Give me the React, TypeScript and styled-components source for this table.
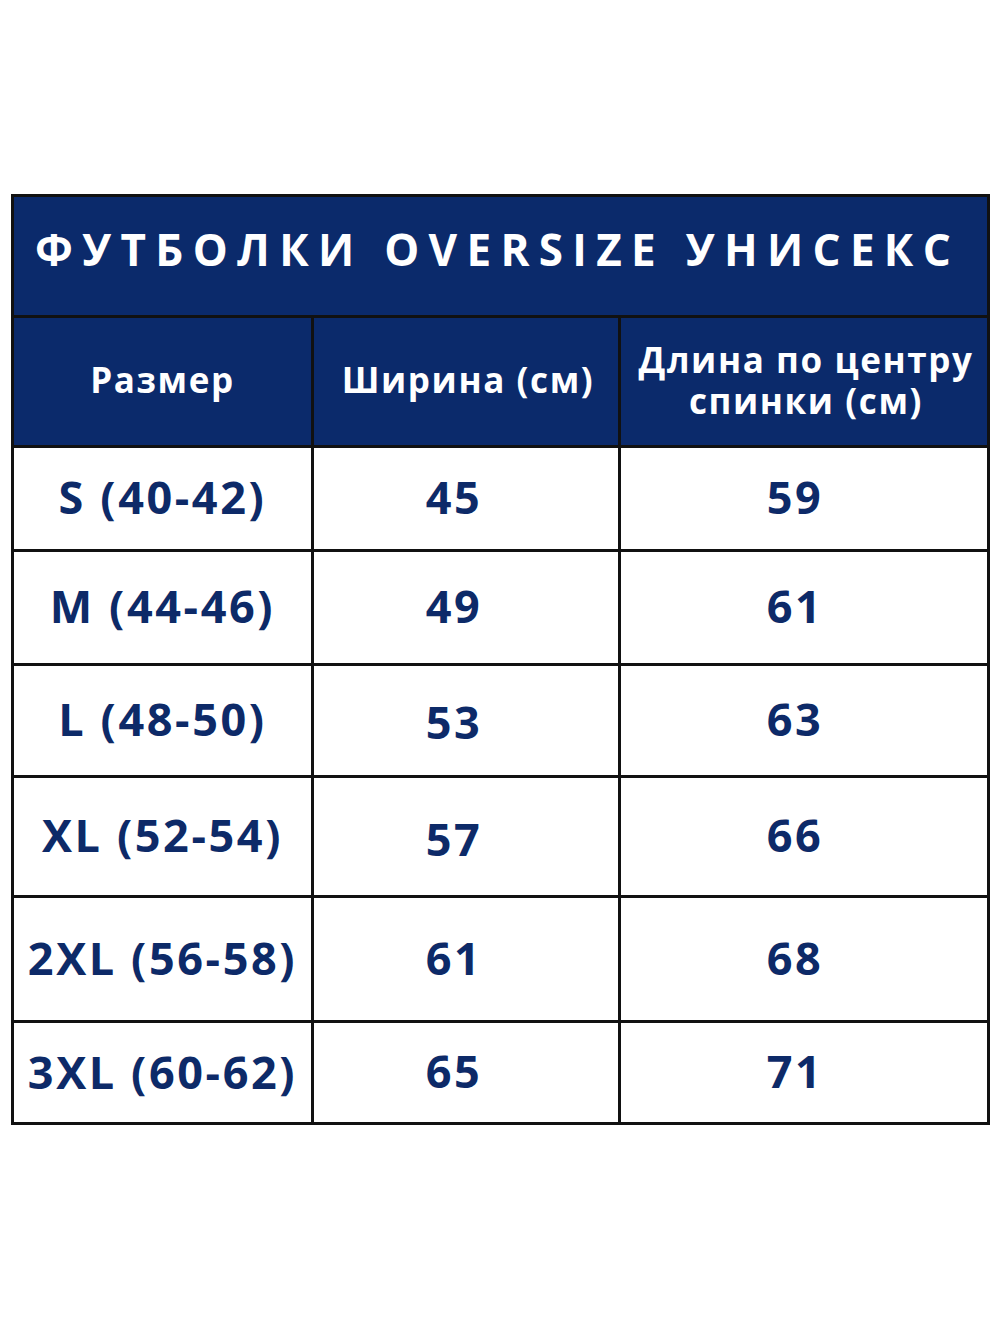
import React from "react";
import styled, { createGlobalStyle } from "styled-components";

const Global = createGlobalStyle`
  html, body { margin: 0; padding: 0; background: #ffffff; }
  body { font-family: "Open Sans", "Liberation Sans", sans-serif; }
`;

const Page = styled.div`
  width: 1000px;
  height: 1333px;
  padding: 194px 0 0 11px;
  box-sizing: border-box;
`;

const Table = styled.div`
  width: 979px;
  box-sizing: border-box;
  display: grid;
  grid-template-columns: 297px 304px 366px;
  grid-template-rows: 118px 127px 101px 111px 109px 117px 122px 99px;
  gap: 3px;
  padding: 3px;
  background: #111111;
`;

const Title = styled.div`
  grid-column: 1 / -1;
  background: #0b2a6b;
  color: #ffffff;
  font-weight: 700;
  font-size: 44px;
  letter-spacing: 9.3px;
  white-space: nowrap;
  display: flex;
  align-items: center;
  justify-content: center;
  padding-bottom: 14px;
  padding-right: 6px;
  box-sizing: border-box;
`;

const Head = styled.div<{ $shift?: number }>`
  background: #0b2a6b;
  color: #ffffff;
  font-weight: 700;
  font-size: 35px;
  line-height: 41px;
  letter-spacing: 1.6px;
  text-align: center;
  display: flex;
  align-items: center;
  justify-content: center;
  padding-left: ${(p) => p.$shift ?? 0}px;
  padding-bottom: 4px;
  box-sizing: border-box;
`;

const Cell = styled.div<{ $shift?: number; $dy?: number }>`
  background: #ffffff;
  color: #0d2a68;
  font-weight: 700;
  font-size: 45px;
  letter-spacing: 2.6px;
  display: flex;
  align-items: center;
  justify-content: center;
  padding-right: ${(p) => p.$shift ?? 0}px;
  padding-top: ${(p) => (p.$dy ?? 0) * 2}px;
  padding-bottom: 4px;
  box-sizing: border-box;
`;

const rows: [string, string, string, number, number, number][] = [
  ["S (40-42)", "45", "59", 0, 0, 0],
  ["M (44-46)", "49", "61", -2, 0, 0],
  ["L (48-50)", "53", "63", -3, 3, 0],
  ["XL (52-54)", "57", "66", 0, 4, -1],
  ["2XL (56-58)", "61", "68", 0, -1, 0],
  ["3XL (60-62)", "65", "71", 1, -1, 0],
];

export default function App() {
  return (
    <>
      <Global />
      <Page>
        <Table>
          <Title>ФУТБОЛКИ OVERSIZE УНИСЕКС</Title>
          <Head>Размер</Head>
          <Head $shift={4}>Ширина (см)</Head>
          <Head $shift={4}>
            Длина по центру
            <br />
            спинки (см)
          </Head>
          {rows.map(([s, w, l, d1, d2, d3]) => (
            <React.Fragment key={s}>
              <Cell $dy={d1}>{s}</Cell>
              <Cell $shift={24} $dy={d2}>
                {w}
              </Cell>
              <Cell $shift={18} $dy={d3}>
                {l}
              </Cell>
            </React.Fragment>
          ))}
        </Table>
      </Page>
    </>
  );
}
